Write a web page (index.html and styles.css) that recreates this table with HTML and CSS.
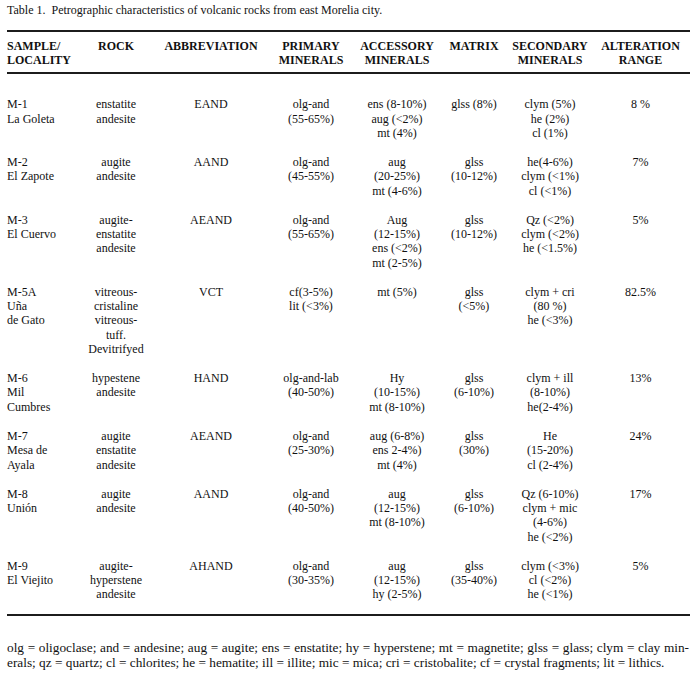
FILE: index.html
```html
<!DOCTYPE html>
<html>
<head>
<meta charset="utf-8">
<link rel="stylesheet" href="styles.css">
</head>
<body>
<div class="page">
  <p class="title">Table 1.&nbsp; Petrographic characteristics of volcanic rocks from east Morelia city.</p>
  <table class="tbl">
    <colgroup>
      <col class="c1"><col class="c2"><col class="c3"><col class="c4"><col class="c5"><col class="c6"><col class="c7"><col class="c8">
    </colgroup>
    <thead>
      <tr>
        <th class="left">SAMPLE/<br>LOCALITY</th>
        <th>ROCK</th>
        <th>ABBREVIATION</th>
        <th>PRIMARY<br>MINERALS</th>
        <th>ACCESSORY<br>MINERALS</th>
        <th>MATRIX</th>
        <th>SECONDARY<br>MINERALS</th>
        <th>ALTERATION<br>RANGE</th>
      </tr>
    </thead>
    <tbody>
      <tr class="first">
        <td class="left">M-1<br>La Goleta</td>
        <td>enstatite<br>andesite</td>
        <td>EAND</td>
        <td>olg-and<br>(55-65%)</td>
        <td>ens (8-10%)<br>aug (&lt;2%)<br>mt (4%)</td>
        <td>glss (8%)</td>
        <td>clym (5%)<br>he (2%)<br>cl (1%)</td>
        <td>8 %</td>
      </tr>
      <tr>
        <td class="left">M-2<br>El Zapote</td>
        <td>augite<br>andesite</td>
        <td>AAND</td>
        <td>olg-and<br>(45-55%)</td>
        <td>aug<br>(20-25%)<br>mt (4-6%)</td>
        <td>glss<br>(10-12%)</td>
        <td>he(4-6%)<br>clym (&lt;1%)<br>cl (&lt;1%)</td>
        <td>7%</td>
      </tr>
      <tr>
        <td class="left">M-3<br>El Cuervo</td>
        <td>augite-<br>enstatite<br>andesite</td>
        <td>AEAND</td>
        <td>olg-and<br>(55-65%)</td>
        <td>Aug<br>(12-15%)<br>ens (&lt;2%)<br>mt (2-5%)</td>
        <td>glss<br>(10-12%)</td>
        <td>Qz (&lt;2%)<br>clym (&lt;2%)<br>he (&lt;1.5%)</td>
        <td>5%</td>
      </tr>
      <tr>
        <td class="left">M-5A<br>Uña<br>de Gato</td>
        <td>vitreous-<br>cristaline<br>vitreous-<br>tuff.<br>Devitrifyed</td>
        <td>VCT</td>
        <td>cf(3-5%)<br>lit (&lt;3%)</td>
        <td>mt (5%)</td>
        <td>glss<br>(&lt;5%)</td>
        <td>clym + cri<br>(80 %)<br>he (&lt;3%)</td>
        <td>82.5%</td>
      </tr>
      <tr>
        <td class="left">M-6<br>Mil<br>Cumbres</td>
        <td>hypestene<br>andesite</td>
        <td>HAND</td>
        <td>olg-and-lab<br>(40-50%)</td>
        <td>Hy<br>(10-15%)<br>mt (8-10%)</td>
        <td>glss<br>(6-10%)</td>
        <td>clym + ill<br>(8-10%)<br>he(2-4%)</td>
        <td>13%</td>
      </tr>
      <tr>
        <td class="left">M-7<br>Mesa de<br>Ayala</td>
        <td>augite<br>enstatite<br>andesite</td>
        <td>AEAND</td>
        <td>olg-and<br>(25-30%)</td>
        <td>aug (6-8%)<br>ens 2-4%)<br>mt (4%)</td>
        <td>glss<br>(30%)</td>
        <td>He<br>(15-20%)<br>cl (2-4%)</td>
        <td>24%</td>
      </tr>
      <tr>
        <td class="left">M-8<br>Unión</td>
        <td>augite<br>andesite</td>
        <td>AAND</td>
        <td>olg-and<br>(40-50%)</td>
        <td>aug<br>(12-15%)<br>mt (8-10%)</td>
        <td>glss<br>(6-10%)</td>
        <td>Qz (6-10%)<br>clym + mic<br>(4-6%)<br>he (&lt;2%)</td>
        <td>17%</td>
      </tr>
      <tr class="last">
        <td class="left">M-9<br>El Viejito</td>
        <td>augite-<br>hyperstene<br>andesite</td>
        <td>AHAND</td>
        <td>olg-and<br>(30-35%)</td>
        <td>aug<br>(12-15%)<br>hy (2-5%)</td>
        <td>glss<br>(35-40%)</td>
        <td>clym (&lt;3%)<br>cl (&lt;2%)<br>he (&lt;1%)</td>
        <td>5%</td>
      </tr>
    </tbody>
  </table>
  <div class="notes">
    <p class="note-line justify">olg = oligoclase; and = andesine; aug = augite; ens = enstatite; hy = hyperstene; mt = magnetite; glss = glass; clym = clay min-</p>
    <p class="note-line">erals; qz = quartz; cl = chlorites; he = hematite; ill = illite; mic = mica; cri = cristobalite; cf = crystal fragments; lit = lithics.</p>
  </div>
</div>
</body>
</html>
```

FILE: styles.css
```css
html, body {
  margin: 0;
  padding: 0;
  background: #fff;
}
body {
  font-family: "Liberation Serif", "Times New Roman", serif;
  font-size: 12px;
  line-height: 14.35px;
  color: #111;
}
.page {
  padding: 3px 6px 0 7px;
}
.title {
  margin: 0;
  line-height: 14.5px;
}
.tbl {
  margin-top: 12px;
  width: 683px;
  border-collapse: collapse;
  table-layout: fixed;
}
.c1 { width: 70px; }
.c2 { width: 78px; }
.c3 { width: 112px; }
.c4 { width: 88px; }
.c5 { width: 84px; }
.c6 { width: 70px; }
.c7 { width: 82px; }
.c8 { width: 99px; }
.tbl thead th {
  border-top: 2px solid #1c1c1c;
  border-bottom: 2px solid #1c1c1c;
  font-weight: bold;
  text-align: center;
  vertical-align: top;
  padding: 7px 0 5px 0;
  white-space: nowrap;
}
.tbl td {
  text-align: center;
  vertical-align: top;
  padding: 0 0 14.7px 0;
  white-space: nowrap;
}
.tbl tr.first td {
  padding-top: 23px;
}
.tbl tr.last td {
  border-bottom: 2px solid #1c1c1c;
  padding-bottom: 12px;
}
.tbl .left {
  text-align: left;
}
.notes {
  margin-top: 24px;
  width: 682px;
}
.note-line {
  margin: 0;
  font-size: 13.3px;
  line-height: 15px;
}
.justify {
  text-align: justify;
  text-align-last: justify;
}
```
